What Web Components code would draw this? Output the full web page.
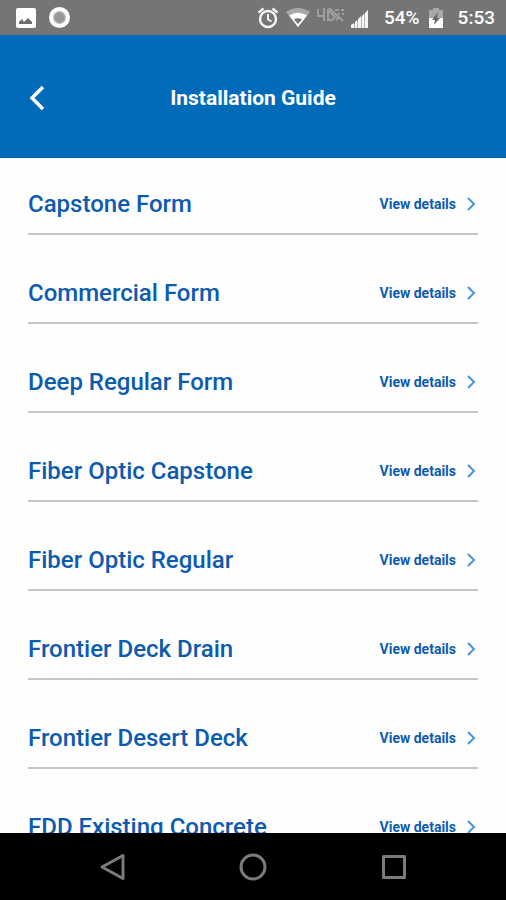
<!DOCTYPE html>
<html lang="en">
<head>
<meta charset="utf-8">
<meta name="viewport" content="width=device-width, initial-scale=1">
<title>Installation Guide</title>
<style>
	body {
		margin: 0;
		font-family: Roboto, "Liberation Sans", sans-serif;
	}
</style>
</head>
<body>
<guide-screen></guide-screen>

<script>
class StatusBar extends HTMLElement {
	constructor() {
		super();
		this.attachShadow({mode: 'open'});
	}

	connectedCallback() {
		this.shadowRoot.innerHTML = `
			<style>
				:host {
					display: flex;
					align-items: center;
					justify-content: space-between;
					height: 35px;
					padding: 0 11px 0 16px;
					background: #757575;
					color: #fff;
					font-size: 19px;
					font-weight: 500;
				}
				div {
					display: flex;
					align-items: center;
				}
				.left { gap: 13px; }
				.right { gap: 9px; }
				.signals { gap: 7px; }
				span { padding-left: 6px; }
				svg { display: block; }
			</style>
			<div class="left">
				<svg width="20" height="20" viewBox="0 0 20 20" aria-hidden="true">
					<rect width="20" height="20" rx="2" fill="#fff"/>
					<path d="M3 16v-2l3-3 2 3 4-4 4 4v2z" fill="#6c6c6c"/>
				</svg>
				<svg width="21" height="21" viewBox="0 0 21 21" aria-hidden="true">
					<circle cx="10.5" cy="10.5" r="10.5" fill="#fff"/>
					<circle cx="10.5" cy="10.5" r="6.5" fill="#b4b4b4"/>
					<circle cx="10.5" cy="10.5" r="5" fill="#979797"/>
				</svg>
			</div>
			<div class="right">
				<div class="signals">
					<svg width="22" height="22" viewBox="0 0 22 22" fill="none" stroke="#f4f4f4" aria-hidden="true">
						<circle cx="11" cy="12" r="8" stroke-width="2.4"/>
						<path d="M1.5 5.5l5-4M20.5 5.5l-5-4" stroke-width="2.4"/>
						<path d="M11 7v5.5l3.5 2" stroke-width="2"/>
					</svg>
					<svg width="24" height="19" viewBox="0 0 24 19" aria-hidden="true">
						<path d="M0 4Q12-4 24 4L12 19z" fill="#a8a8a8"/>
						<path d="M3 7.5Q12 2 21 7.5L12 19z" fill="#fff"/>
						<path d="M8 11.5Q12 9 16 11.5L12 16z" fill="#757575"/>
					</svg>
					<svg width="27" height="20" viewBox="0 0 27 20" fill="none" stroke="#9f9f9f" stroke-width="2" aria-hidden="true">
						<path d="M1 1v7h7M7 0v13M11 1v11h4l3-3-7-7M12 0l14 13M18 2h4M24 2h3M21 6h2M25 6h2M19 12l3-3"/>
					</svg>
					<svg width="18" height="20" viewBox="0 0 18 20" aria-hidden="true">
						<path d="M0 20L17 2v18z" fill="#b4b4b4"/>
						<path d="M0 20v-3l3-2v5zM4 20v-6l2-2v8zM7 20v-9l3-3v12zM11 20V8l2-2v14zM14 20V5l3-3v18z" fill="#f4f4f4"/>
					</svg>
				</div>
				<span>54%</span>
				<svg width="14" height="20" viewBox="0 0 14 20" aria-hidden="true">
					<path d="M4 0h6v2h4v9H0V2h4z" fill="#a8a8a8"/>
					<path d="M0 10h14v10H0z" fill="#fff"/>
					<path d="M9 4l-6 8h3l-1 5 6-7H8z" fill="#686868"/>
				</svg>
				<span>5:53</span>
			</div>
		`;
	}
}

class GuideHeader extends HTMLElement {
	constructor() {
		super();
		this.attachShadow({mode: 'open'});
	}

	connectedCallback() {
		this.shadowRoot.innerHTML = `
			<style>
				:host {
					display: grid;
					grid-template-columns: 48px 1fr 48px;
					align-items: center;
					height: 119px;
					padding: 3px 13px 0;
					border-bottom: 1px solid #0a5ba6;
					background: #006cb9;
					color: #fff;
				}
				button {
					display: grid;
					place-items: center;
					height: 48px;
					padding: 0;
					border: 0;
					background: none;
					color: inherit;
				}
				h1 {
					margin: 0;
					font-size: 21px;
					line-height: 28px;
					font-weight: 700;
					text-align: center;
				}
			</style>
			<button type="button" aria-label="Back">
				<svg width="16" height="26" viewBox="0 0 16 26" fill="none" stroke="currentColor" stroke-width="3.5" aria-hidden="true">
					<path d="M14 2L3 13l11 11"/>
				</svg>
			</button>
			<h1><slot></slot></h1>
		`;
	}
}

class GuideRow extends HTMLElement {
	constructor() {
		super();
		this.attachShadow({mode: 'open'});
	}

	connectedCallback() {
		this.shadowRoot.innerHTML = `
			<style>
				:host {
					display: flex;
					align-items: center;
					justify-content: space-between;
					padding-bottom: 15px;
					border-bottom: 2px solid #c6c6c6;
					color: #0d5bb0;
				}
				h2 {
					margin: 0;
					font-size: 24px;
					line-height: 28px;
					font-weight: 500;
				}
				a {
					display: flex;
					align-items: center;
					gap: 11px;
					padding-right: 2px;
					color: inherit;
					font-size: 14px;
					line-height: 28px;
					font-weight: 700;
					text-decoration: none;
				}
			</style>
			<h2 id="name"><slot></slot></h2>
			<a href="#" id="link" aria-labelledby="link name">View details
				<svg width="9" height="14" viewBox="0 0 9 14" fill="none" stroke="#4a94dd" stroke-width="2" aria-hidden="true">
					<path d="M1 1l6 6-6 6"/>
				</svg>
			</a>
		`;
	}
}

class NavBar extends HTMLElement {
	constructor() {
		super();
		this.attachShadow({mode: 'open'});
	}

	connectedCallback() {
		this.shadowRoot.innerHTML = `
			<style>
				:host {
					display: flex;
					align-items: center;
					justify-content: center;
					gap: 93px;
					height: 67px;
					background: #000;
				}
				button {
					display: grid;
					place-items: center;
					width: 48px;
					height: 48px;
					padding: 0;
					border: 0;
					background: none;
				}
				svg {
					fill: none;
					stroke: #7b7b7b;
					stroke-width: 3px;
					stroke-linejoin: round;
				}
			</style>
			<button type="button" aria-label="Back">
				<svg width="28" height="28" viewBox="0 0 28 28"><path d="M25 2.5v23L4 14z"/></svg>
			</button>
			<button type="button" aria-label="Home">
				<svg width="28" height="28" viewBox="0 0 28 28"><circle cx="14" cy="14" r="12"/></svg>
			</button>
			<button type="button" aria-label="Recent apps">
				<svg width="28" height="28" viewBox="0 0 28 28"><rect x="3.5" y="3.5" width="21" height="21"/></svg>
			</button>
		`;
	}
}

class GuideScreen extends HTMLElement {
	constructor() {
		super();
		this.attachShadow({mode: 'open'});
	}

	static guides = [
		'Capstone Form',
		'Commercial Form',
		'Deep Regular Form',
		'Fiber Optic Capstone',
		'Fiber Optic Regular',
		'Frontier Deck Drain',
		'Frontier Desert Deck',
		'FDD Existing Concrete'
	];

	connectedCallback() {
		// the list scrolls between the header and the nav bar
		this.shadowRoot.innerHTML = `
			<style>
				:host {
					display: flex;
					flex-direction: column;
					height: 100vh;
					background: #fefefe;
				}
				status-bar, guide-header, nav-bar { flex: none; }
				main {
					flex: 1;
					display: flex;
					flex-direction: column;
					gap: 44px;
					min-height: 0;
					padding: 32px 28px 0;
					overflow-y: auto;
					scrollbar-width: none;
				}
				guide-row { flex: none; }
			</style>
			<status-bar></status-bar>
			<guide-header>Installation Guide</guide-header>
			<main>
				${GuideScreen.guides.map(name => `<guide-row>${name}</guide-row>`).join('')}
			</main>
			<nav-bar></nav-bar>
		`;
	}
}

customElements.define('status-bar', StatusBar);
customElements.define('guide-header', GuideHeader);
customElements.define('guide-row', GuideRow);
customElements.define('nav-bar', NavBar);
customElements.define('guide-screen', GuideScreen);
</script>
</body>
</html>
